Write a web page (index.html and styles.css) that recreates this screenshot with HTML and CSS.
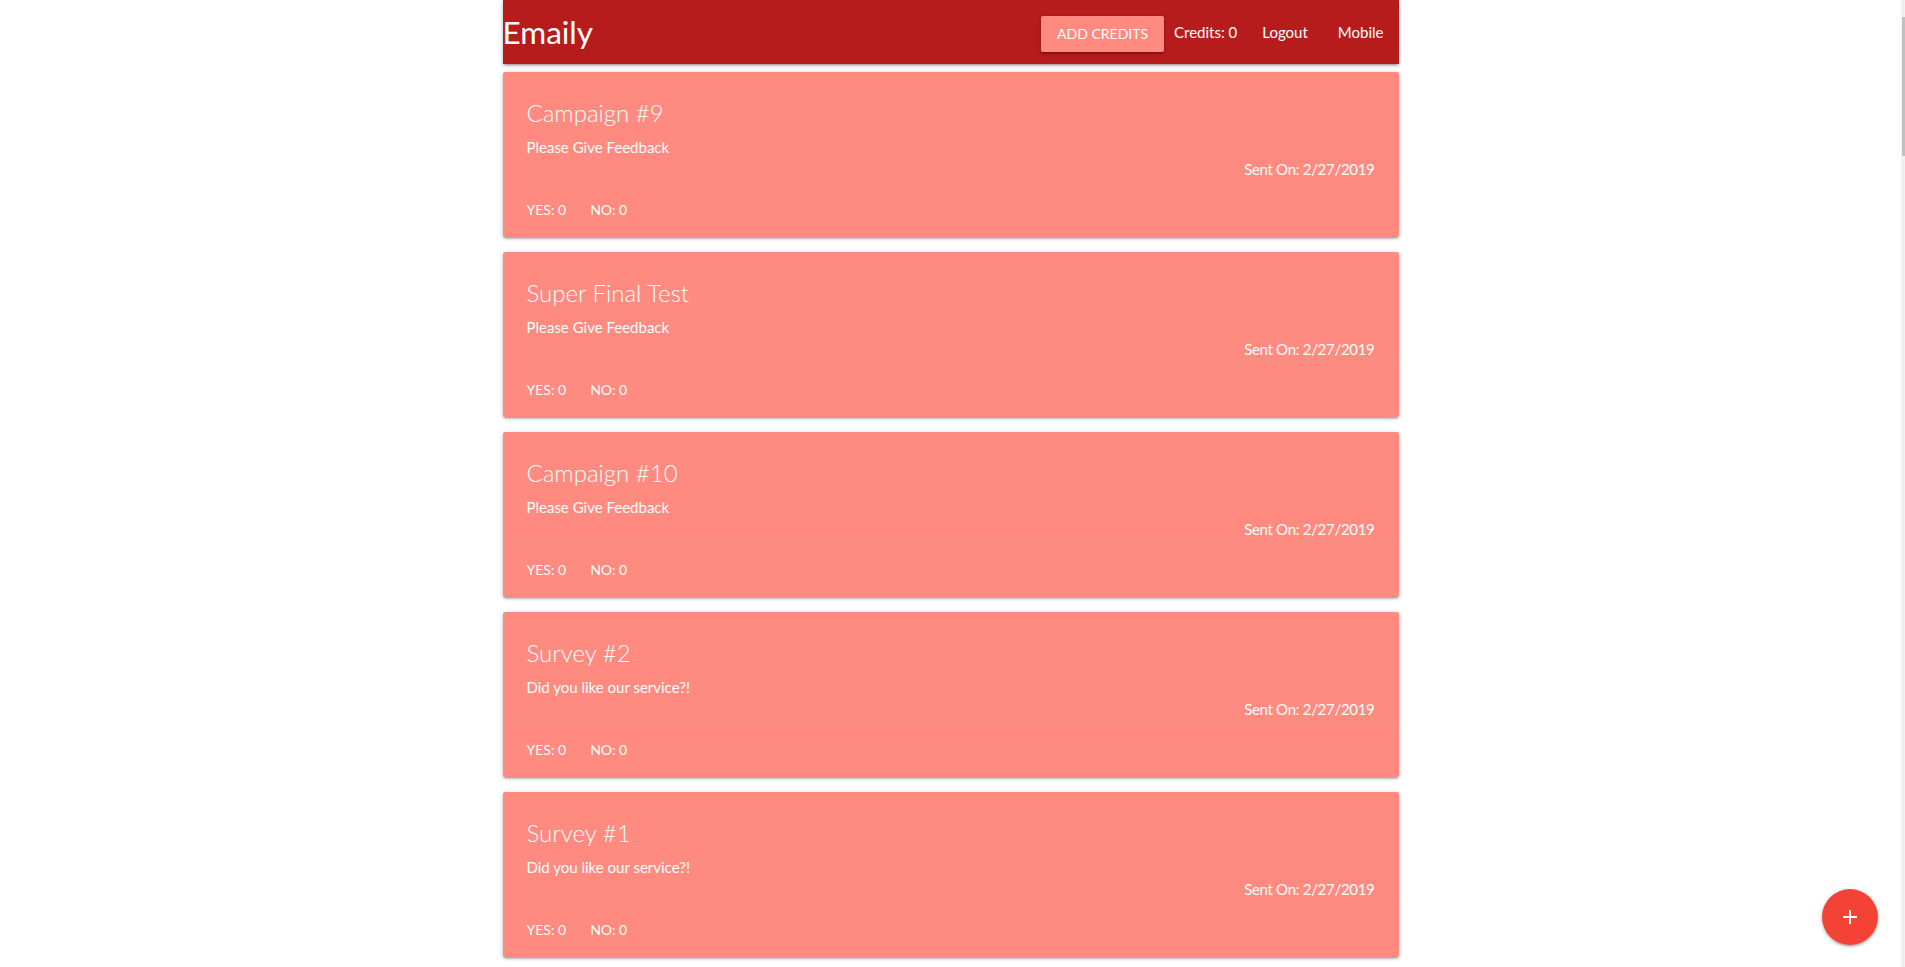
FILE: index.html
```html
<!DOCTYPE html>
<html lang="en">
<head>
<meta charset="utf-8">
<title>Emaily</title>
<link rel="stylesheet" href="styles.css">
</head>
<body>
<div class="container">
  <nav class="navbar">
    <a class="brand" href="#">Emaily</a>
    <ul class="nav-links">
      <li class="nav-btn-item"><a class="btn" href="#">Add Credits</a></li>
      <li class="credits">Credits: 0</li>
      <li><a class="nav-link" href="#">Logout</a></li>
      <li><a class="nav-link" href="#">Mobile</a></li>
    </ul>
  </nav>

  <main class="survey-list">
    <div class="card"><div class="card-content"><span class="card-title">Campaign #9</span><p>Please Give Feedback</p><p class="sent">Sent On: 2/27/2019</p></div><div class="card-action"><span>Yes: 0</span><span>No: 0</span></div></div>
    <div class="card"><div class="card-content"><span class="card-title">Super Final Test</span><p>Please Give Feedback</p><p class="sent">Sent On: 2/27/2019</p></div><div class="card-action"><span>Yes: 0</span><span>No: 0</span></div></div>
    <div class="card"><div class="card-content"><span class="card-title">Campaign #10</span><p>Please Give Feedback</p><p class="sent">Sent On: 2/27/2019</p></div><div class="card-action"><span>Yes: 0</span><span>No: 0</span></div></div>
    <div class="card"><div class="card-content"><span class="card-title">Survey #2</span><p>Did you like our service?!</p><p class="sent">Sent On: 2/27/2019</p></div><div class="card-action"><span>Yes: 0</span><span>No: 0</span></div></div>
    <div class="card"><div class="card-content"><span class="card-title">Survey #1</span><p>Did you like our service?!</p><p class="sent">Sent On: 2/27/2019</p></div><div class="card-action"><span>Yes: 0</span><span>No: 0</span></div></div>
    <div class="card"><div class="card-content"><span class="card-title">Campaign #8</span><p>Please Give Feedback</p><p class="sent">Sent On: 2/26/2019</p></div><div class="card-action"><span>Yes: 0</span><span>No: 0</span></div></div>
    <div class="card"><div class="card-content"><span class="card-title">Campaign #7</span><p>Please Give Feedback</p><p class="sent">Sent On: 2/26/2019</p></div><div class="card-action"><span>Yes: 0</span><span>No: 0</span></div></div>
    <div class="card"><div class="card-content"><span class="card-title">Campaign #6</span><p>Please Give Feedback</p><p class="sent">Sent On: 2/26/2019</p></div><div class="card-action"><span>Yes: 0</span><span>No: 0</span></div></div>
    <div class="card"><div class="card-content"><span class="card-title">Final Test</span><p>Please Give Feedback</p><p class="sent">Sent On: 2/26/2019</p></div><div class="card-action"><span>Yes: 0</span><span>No: 0</span></div></div>
    <div class="card"><div class="card-content"><span class="card-title">Campaign #5</span><p>Please Give Feedback</p><p class="sent">Sent On: 2/25/2019</p></div><div class="card-action"><span>Yes: 0</span><span>No: 0</span></div></div>
    <div class="card"><div class="card-content"><span class="card-title">Campaign #4</span><p>Please Give Feedback</p><p class="sent">Sent On: 2/25/2019</p></div><div class="card-action"><span>Yes: 0</span><span>No: 0</span></div></div>
    <div class="card"><div class="card-content"><span class="card-title">Campaign #3</span><p>Please Give Feedback</p><p class="sent">Sent On: 2/25/2019</p></div><div class="card-action"><span>Yes: 0</span><span>No: 0</span></div></div>
    <div class="card"><div class="card-content"><span class="card-title">Campaign #2</span><p>Please Give Feedback</p><p class="sent">Sent On: 2/24/2019</p></div><div class="card-action"><span>Yes: 0</span><span>No: 0</span></div></div>
    <div class="card"><div class="card-content"><span class="card-title">Campaign #1</span><p>Please Give Feedback</p><p class="sent">Sent On: 2/24/2019</p></div><div class="card-action"><span>Yes: 0</span><span>No: 0</span></div></div>
    <div class="card"><div class="card-content"><span class="card-title">Test Survey #6</span><p>How was your experience?</p><p class="sent">Sent On: 2/23/2019</p></div><div class="card-action"><span>Yes: 0</span><span>No: 0</span></div></div>
    <div class="card"><div class="card-content"><span class="card-title">Test Survey #5</span><p>How was your experience?</p><p class="sent">Sent On: 2/23/2019</p></div><div class="card-action"><span>Yes: 0</span><span>No: 0</span></div></div>
    <div class="card"><div class="card-content"><span class="card-title">Test Survey #4</span><p>How was your experience?</p><p class="sent">Sent On: 2/22/2019</p></div><div class="card-action"><span>Yes: 0</span><span>No: 0</span></div></div>
    <div class="card"><div class="card-content"><span class="card-title">Test Survey #3</span><p>How was your experience?</p><p class="sent">Sent On: 2/22/2019</p></div><div class="card-action"><span>Yes: 0</span><span>No: 0</span></div></div>
    <div class="card"><div class="card-content"><span class="card-title">Test Survey #2</span><p>How was your experience?</p><p class="sent">Sent On: 2/21/2019</p></div><div class="card-action"><span>Yes: 0</span><span>No: 0</span></div></div>
    <div class="card"><div class="card-content"><span class="card-title">Test Survey #1</span><p>How was your experience?</p><p class="sent">Sent On: 2/21/2019</p></div><div class="card-action"><span>Yes: 0</span><span>No: 0</span></div></div>
    <div class="card"><div class="card-content"><span class="card-title">Feedback Request</span><p>Please Give Feedback</p><p class="sent">Sent On: 2/20/2019</p></div><div class="card-action"><span>Yes: 0</span><span>No: 0</span></div></div>
    <div class="card"><div class="card-content"><span class="card-title">Weekly Check-in</span><p>Are you enjoying the app?</p><p class="sent">Sent On: 2/20/2019</p></div><div class="card-action"><span>Yes: 0</span><span>No: 0</span></div></div>
    <div class="card"><div class="card-content"><span class="card-title">New Feature</span><p>Do you like the new feature?</p><p class="sent">Sent On: 2/19/2019</p></div><div class="card-action"><span>Yes: 0</span><span>No: 0</span></div></div>
    <div class="card"><div class="card-content"><span class="card-title">Newsletter</span><p>Would you like more emails?</p><p class="sent">Sent On: 2/19/2019</p></div><div class="card-action"><span>Yes: 0</span><span>No: 0</span></div></div>
    <div class="card"><div class="card-content"><span class="card-title">Product Survey</span><p>Did you like our product?</p><p class="sent">Sent On: 2/18/2019</p></div><div class="card-action"><span>Yes: 0</span><span>No: 0</span></div></div>
    <div class="card"><div class="card-content"><span class="card-title">Support Survey</span><p>Was our support helpful?</p><p class="sent">Sent On: 2/18/2019</p></div><div class="card-action"><span>Yes: 0</span><span>No: 0</span></div></div>
    <div class="card"><div class="card-content"><span class="card-title">Beta Test</span><p>Please Give Feedback</p><p class="sent">Sent On: 2/17/2019</p></div><div class="card-action"><span>Yes: 0</span><span>No: 0</span></div></div>
    <div class="card"><div class="card-content"><span class="card-title">Alpha Test</span><p>Please Give Feedback</p><p class="sent">Sent On: 2/17/2019</p></div><div class="card-action"><span>Yes: 0</span><span>No: 0</span></div></div>
    <div class="card"><div class="card-content"><span class="card-title">Test #4</span><p>Please Give Feedback</p><p class="sent">Sent On: 2/16/2019</p></div><div class="card-action"><span>Yes: 0</span><span>No: 0</span></div></div>
    <div class="card"><div class="card-content"><span class="card-title">Test #3</span><p>Please Give Feedback</p><p class="sent">Sent On: 2/16/2019</p></div><div class="card-action"><span>Yes: 0</span><span>No: 0</span></div></div>
    <div class="card"><div class="card-content"><span class="card-title">Test #2</span><p>Please Give Feedback</p><p class="sent">Sent On: 2/15/2019</p></div><div class="card-action"><span>Yes: 0</span><span>No: 0</span></div></div>
    <div class="card"><div class="card-content"><span class="card-title">Test #1</span><p>Please Give Feedback</p><p class="sent">Sent On: 2/15/2019</p></div><div class="card-action"><span>Yes: 0</span><span>No: 0</span></div></div>
    <div class="card"><div class="card-content"><span class="card-title">Hello</span><p>Is this working?</p><p class="sent">Sent On: 2/14/2019</p></div><div class="card-action"><span>Yes: 0</span><span>No: 0</span></div></div>
    <div class="card"><div class="card-content"><span class="card-title">My Survey</span><p>Did you like our service?!</p><p class="sent">Sent On: 2/14/2019</p></div><div class="card-action"><span>Yes: 0</span><span>No: 0</span></div></div>
    <div class="card"><div class="card-content"><span class="card-title">First Survey</span><p>Did you like our service?!</p><p class="sent">Sent On: 2/13/2019</p></div><div class="card-action"><span>Yes: 0</span><span>No: 0</span></div></div>
    <div class="card"><div class="card-content"><span class="card-title">Test</span><p>Test</p><p class="sent">Sent On: 2/13/2019</p></div><div class="card-action"><span>Yes: 0</span><span>No: 0</span></div></div>
  </main>
</div>

<a class="fab" href="#" aria-label="New survey">
  <svg class="fab-icon" viewBox="0 0 24 24" width="24" height="24" aria-hidden="true"><path d="M19 13h-6v6h-2v-6H5v-2h6V5h2v6h6v2z" fill="#fff"/></svg>
</a>

<div class="scroll-rail" aria-hidden="true"><div class="scroll-thumb"></div></div>
</body>
</html>
```

FILE: styles.css
```css
html {
  font-size: 15px;
}

body {
  margin: 0 4px 0 0;
  font-family: Lato, "Liberation Sans", sans-serif;
  font-weight: 400;
  line-height: 1.5;
  color: rgba(0, 0, 0, 0.87);
  background: #fff;
}

a {
  text-decoration: none;
  color: inherit;
}

.container {
  width: 896px;
  margin: 0 auto;
}

/* Navbar */
.navbar {
  height: 64px;
  background: #b71c1c;
  color: #fff;
  display: flex;
  justify-content: space-between;
  align-items: flex-start;
  box-shadow: 0 2px 2px 0 rgba(0, 0, 0, 0.14), 0 3px 1px -2px rgba(0, 0, 0, 0.12), 0 1px 5px 0 rgba(0, 0, 0, 0.2);
}

.brand {
  font-size: 2.1rem;
  line-height: 64px;
  color: #fff;
}

.nav-links {
  display: flex;
  align-items: flex-start;
  list-style: none;
  margin: 0;
  padding: 0;
  height: 64px;
}

.nav-links li {
  line-height: 64px;
  font-size: 1rem;
}

.nav-links .nav-btn-item {
  padding-top: 16px;
  line-height: 36px;
}

.btn {
  display: block;
  height: 36px;
  line-height: 36px;
  padding: 0 16px;
  background: #ff8a80;
  color: #fff;
  border-radius: 2px;
  font-size: 14px;
  text-transform: uppercase;
  box-shadow: 0 2px 2px 0 rgba(0, 0, 0, 0.14), 0 3px 1px -2px rgba(0, 0, 0, 0.12), 0 1px 5px 0 rgba(0, 0, 0, 0.2);
}

.credits {
  margin: 0 10px;
}

.nav-link {
  display: block;
  padding: 0 15px;
  color: #fff;
}

/* Cards */
.card {
  background: #ff8a80;
  color: #fff;
  border-radius: 2px;
  margin: 0.5rem 0 1rem;
  box-shadow: 0 2px 2px 0 rgba(0, 0, 0, 0.14), 0 3px 1px -2px rgba(0, 0, 0, 0.12), 0 1px 5px 0 rgba(0, 0, 0, 0.2);
}

.card-content {
  padding: 25px 24px 0.5px;
}

.card-title {
  display: block;
  font-size: 24px;
  font-weight: 300;
  line-height: 32px;
  margin-bottom: 7px;
}

.card-content p {
  margin: 0;
}

.card-content .sent {
  text-align: right;
  letter-spacing: -0.3px;
}

.card-action {
  border-top: 1px solid rgba(160, 160, 160, 0.2);
  padding: 17px 24px 15px;
  text-transform: uppercase;
  font-size: 14px;
  line-height: 22.5px;
}

.card-action span {
  margin-right: 24px;
}

/* Floating action button */
.fab {
  position: fixed;
  right: 27px;
  bottom: 22px;
  width: 56px;
  height: 56px;
  border-radius: 50%;
  background: #f44336;
  display: flex;
  align-items: center;
  justify-content: center;
  box-shadow: 0 2px 2px 0 rgba(0, 0, 0, 0.14), 0 3px 1px -2px rgba(0, 0, 0, 0.12), 0 1px 5px 0 rgba(0, 0, 0, 0.2);
}

.fab-icon {
  display: block;
}

/* Thin page scrollbar shown at the right edge */
.scroll-rail {
  position: fixed;
  top: 0;
  right: 0;
  bottom: 0;
  width: 4px;
  background: #f1f1f1;
}

.scroll-thumb {
  margin: 17px 0 0 1px;
  height: 139px;
  background: #c1c1c1;
}
```
